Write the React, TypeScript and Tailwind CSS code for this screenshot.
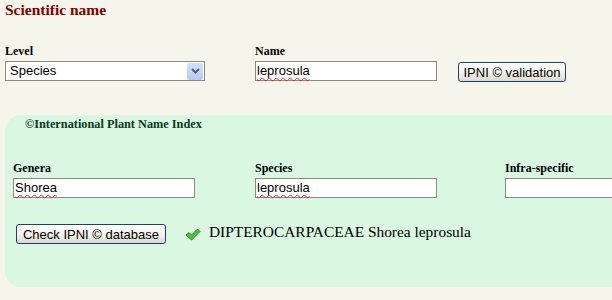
import React from 'react';

const sans = "font-['Liberation_Sans',Arial,sans-serif]";

function Label({ children }: { children: React.ReactNode }) {
  return <label className="block text-[12px] leading-[14px] font-bold text-black">{children}</label>;
}

function TextBox({ value, width, spell = false }: { value: string; width: string; spell?: boolean }) {
  return (
    <div className={`mt-[3px] h-[20px] ${width} bg-white border border-[#8b8a84] px-[1px] flex items-center ${sans} text-[13px] text-black`}>
      <span className={spell ? 'underline decoration-wavy decoration-[#e0262f] decoration-1 underline-offset-[2px]' : ''}>
        {value}
      </span>
    </div>
  );
}

function XpButton({ children, className = '' }: { children: React.ReactNode; className?: string }) {
  return (
    <button
      className={`block h-[20px] px-[4px] rounded-[3px] border border-[#1c3f75] bg-gradient-to-b from-white via-[#f4f3ee] to-[#dcd9cc] ${sans} text-[13px] leading-none text-black ${className}`}
    >
      {children}
    </button>
  );
}

export default function App() {
  return (
    <div className="w-[612px] h-[300px] overflow-hidden bg-[#f5f5eb] font-['Liberation_Serif','Times_New_Roman',serif]">
      <h1 className="pl-[5px] h-[20px] leading-[20px] text-[15.5px] font-bold text-[#800000]">Scientific name</h1>

      <div className="flex items-start pl-[5px] mt-[24px]">
        <div className="w-[250px]">
          <Label>Level</Label>
          <div className={`mt-[3px] h-[20px] w-[200px] bg-white border border-[#8b8a84] flex items-center ${sans} text-[13px]`}>
            <span className="flex-1 pl-[4px]">Species</span>
            <span className="w-[16px] h-[17px] mr-[1px] rounded-[2px] bg-gradient-to-b from-[#d4e1fb] to-[#b5cbf6] flex items-center justify-center">
              <svg width="9" height="6" viewBox="0 0 9 6">
                <polyline points="1,1 4.5,4.5 8,1" fill="none" stroke="#4d6185" strokeWidth="2" />
              </svg>
            </span>
          </div>
        </div>
        <div className="w-[203px]">
          <Label>Name</Label>
          <TextBox value="leprosula" width="w-[182px]" spell />
        </div>
        <XpButton className="mt-[18px] w-[108px]">IPNI © validation</XpButton>
      </div>

      <section className="mt-[33px] ml-[5px] w-[640px] h-[172px] rounded-l-[16px] bg-[#d9f7e1]">
        <h2 className="pl-[20px] pt-[1px] text-[12.3px] leading-[16px] font-bold text-[#0a3a1c]">©International Plant Name Index</h2>

        <div className="flex pl-[8px] mt-[29px]">
          <div className="w-[242px]">
            <Label>Genera</Label>
            <TextBox value="Shorea" width="w-[182px]" spell />
          </div>
          <div className="w-[250px]">
            <Label>Species</Label>
            <TextBox value="leprosula" width="w-[182px]" spell />
          </div>
          <div>
            <Label>Infra-specific</Label>
            <TextBox value="" width="w-[120px]" />
          </div>
        </div>

        <div className="flex items-center pl-[11px] mt-[26px]">
          <XpButton className="w-[150px] h-[19px]">Check IPNI © database</XpButton>
          <svg className="ml-[19px] mt-[1px]" width="16" height="13" viewBox="0 0 16 13">
            <path d="M1 7 L4 4.5 L6.5 7 L12.5 1 L15 3.5 L6.5 12 Z" fill="#4fc23a" stroke="#1f8a1c" strokeWidth="1" strokeLinejoin="round" />
          </svg>
          <span className="ml-[8px] -mt-[4px] text-[15.4px] leading-[18px] text-black">DIPTEROCARPACEAE Shorea leprosula</span>
        </div>
      </section>
    </div>
  );
}
